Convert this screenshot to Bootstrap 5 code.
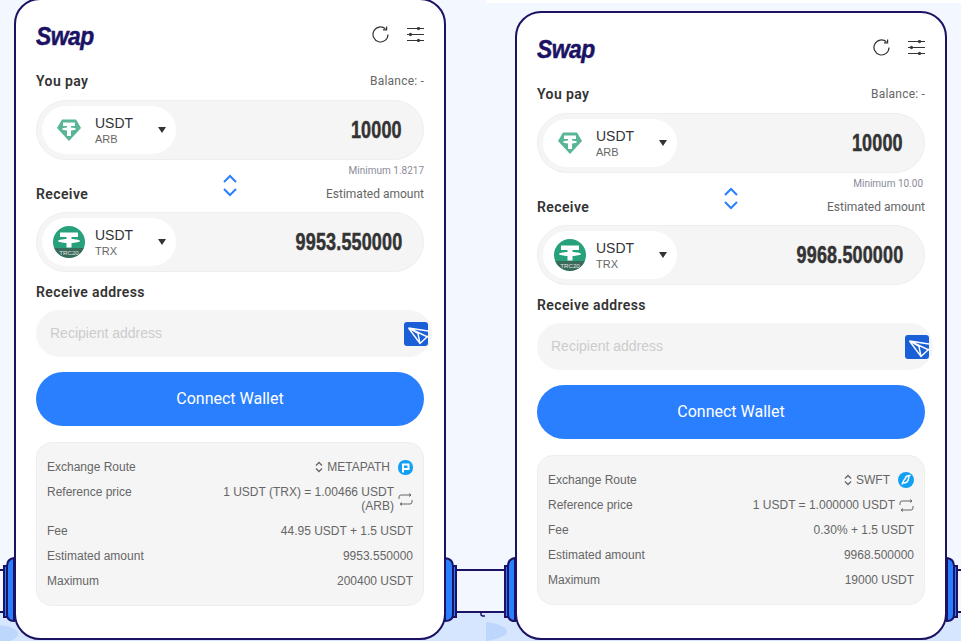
<!DOCTYPE html>
<html>
<head>
  <meta charset="utf-8">
  <title>Swap</title>
  <link href="https://cdn.jsdelivr.net/npm/bootstrap@5.3.3/dist/css/bootstrap.min.css" rel="stylesheet">
  <style>
    html, body { height: 641px; overflow: hidden; }
    body { background: #f3f7ff; font-family: Roboto, "Liberation Sans", sans-serif; color: #333; }
    .stage { position: relative; height: 641px; padding: 0 0 1px 14px; gap: 69px; z-index: 1; }
    .scenery { position: absolute; left: 0; top: 0; z-index: 0; }
    .swap-card { width: 432px; flex: none; background: #fff; border: 2px solid #1c1264; border-radius: 26px; padding: 18px 20px 33px; }
    .swap-card.wrapped { padding-bottom: 32px; }
    .card-head { height: 36px; }
    .head-icons { gap: 18px; margin-bottom: 4px; }
    .swap-logo { display: inline-block; font: italic 700 26px/36px "Liberation Sans", sans-serif; color: #1c1264; letter-spacing: -.6px; -webkit-text-stroke: .5px #1c1264; transform: scaleX(.88); transform-origin: left center; }
    .pay-row { margin-top: 18px; }
    .lbl { font-size: 14px; font-weight: 600; letter-spacing: .4px; line-height: 18px; color: #333; }
    .note { font-size: 12px; line-height: 16px; color: #666; }
    .bal-note { letter-spacing: .2px; }
    .amount-pill { height: 60px; background: #f5f5f5; border: 1px solid #eee; border-radius: 30px; padding: 0 21px 0 5px; margin-top: 10px; }
    .receive-row + .amount-pill { margin-top: 9px; }
    .token-pill { width: 134px; height: 48px; background: #fff; border-radius: 24px; padding: 0 10px 0 11px; }
    .token-icon { width: 32px; margin-right: 10px; flex: none; }
    .tk-name { font: 14px/17px "Liberation Sans", sans-serif; color: #333; }
    .tk-chain { font: 11px/13px "Liberation Sans", sans-serif; color: #666; margin-top: 1px; }
    .caret-down { width: 0; height: 0; border: 4px solid transparent; border-top: 6px solid #333; border-bottom: 0; }
    .amount { display: inline-block; font: 700 24px/28px "Liberation Sans", sans-serif; color: #333; letter-spacing: .2px; -webkit-text-stroke: .5px #333; transform: scaleX(.75); transform-origin: right center; white-space: nowrap; }
    .min-note { font-size: 10px; line-height: 12px; color: #8b8b99; text-align: right; margin-top: 5px; }
    .min-note.inset { padding-right: 2px; }
    .receive-row { display: grid; grid-template-columns: 1fr auto 1fr; margin-top: 8px; height: 18px; align-items: center; }
    .swap-arrows { align-self: start; margin-top: -11px; }
    .addr-title { margin-top: 11px; }
    .addr-pill { height: 47px; width: 396px; background: #f5f5f5; border-radius: 24px; padding: 0 4px 0 14px; margin-top: 9px; }
    .addr-input { background: transparent; border: 0; padding: 0 0 2px; font: 14px "Liberation Sans", sans-serif; box-shadow: none !important; }
    .addr-input::placeholder { color: #ccc; opacity: 1; }
    .addr-icon { flex: none; }
    .wallet-btn { height: 54px; border-radius: 27px; background: #2a7fff; border: 0; font-size: 16px; color: #fff; margin-top: 15px; }
    .info-box { background: #f5f5f5; border: 1px solid #eee; border-radius: 16px; padding: 17px 10px; font: 12px/14px "Liberation Sans", sans-serif; color: #666; gap: 11px; margin-top: 16px; }
    .route-val { height: 14px; }
    .price-text { max-width: 175px; }
  </style>
</head>

<body>
  <svg class="scenery" width="961" height="641" viewBox="0 0 961 641">
    <rect y="612" width="961" height="29" fill="#d6e6ff"/>
    <rect x="486" width="475" height="3" fill="#fff"/>
    <ellipse cx="-4" cy="634" rx="22" ry="9" fill="#bdd6fb"/>
    <path d="M486 622 C500 624 508 628 507 632 C506 636 498 639 486 641Z" fill="#bdd6fb"/>
    <path d="M0 570H4M0 612H4M456 570H505V612H456ZM957 570H961M957 612H961" fill="#f3f7ff" stroke="#1c1264" stroke-width="2"/>
    <path d="M481 612v2q0 2 2 2h2" fill="none" stroke="#1c1264" stroke-width="1.5"/>
    <g fill="#2a7fff" stroke="#1c1264" stroke-width="2">
      <path d="M4 566H8V617H4Z"/>
      <path d="M14 558Q7 559 7 566V614Q7 621 14 621Z"/>
      <path d="M452 566H456V617H452Z"/>
      <path d="M445 558Q453 559 453 566V614Q453 621 445 621Z"/>
      <path d="M505 566H509V617H505Z"/>
      <path d="M515 558Q508 559 508 566V614Q508 621 515 621Z"/>
      <path d="M953 566H957V617H953Z"/>
      <path d="M947 558Q954 559 954 566V614Q954 621 947 621Z"/>
    </g>
  </svg>

  <div class="stage d-flex align-items-end">
    <!-- left card -->
    <div class="swap-card wrapped">
      <div class="card-head d-flex justify-content-between align-items-center">
        <span class="swap-logo">Swap</span>
        <div class="head-icons d-flex align-items-center">
          <svg width="17" height="17" viewBox="0 0 17 17" fill="none" stroke="#333" stroke-width="1.2"><path d="M16 8.5A7.5 7.5 0 1 1 13.4 2.8"/><path d="M14.6 .6V3.8H11"/></svg>
          <svg width="17" height="15" viewBox="0 0 17 15" stroke="#333" stroke-width="1"><path d="M0 1.5H17M0 7.5H17M0 13.5H17"/><circle cx="11.5" cy="1.5" r="1.2" fill="#333"/><circle cx="3.5" cy="7.5" r="1.2" fill="#333"/><circle cx="11.5" cy="13.5" r="1.2" fill="#333"/></svg>
        </div>
      </div>
      <div class="pay-row d-flex justify-content-between align-items-center">
        <span class="lbl">You pay</span><span class="note bal-note">Balance: -</span>
      </div>
      <div class="amount-pill d-flex justify-content-between align-items-center">
        <div class="token-pill d-flex align-items-center">
          <svg class="token-icon" width="32" height="24" viewBox="0 0 32 24"><path d="M9 1.5H23L28 10L16 23L4 10Z" fill="#58b596"/><path d="M10 4.5H22V8H18V9.6C20.4 9.8 23 10.3 23 11C23 11.7 20.4 12.2 18 12.4V18H14V12.4C11.6 12.2 9 11.7 9 11C9 10.3 11.6 9.8 14 9.6V8H10Z" fill="#fff"/></svg>
          <div class="flex-grow-1">
            <div class="tk-name">USDT</div>
            <div class="tk-chain">ARB</div>
          </div>
          <span class="caret-down"></span>
        </div>
        <span class="amount">10000</span>
      </div>
      <div class="min-note">Minimum 1.8217</div>
      <div class="receive-row">
        <span class="lbl">Receive</span>
        <svg class="swap-arrows" width="16" height="24" viewBox="0 0 16 24" fill="none" stroke="#2a7fff" stroke-width="2"><path d="M2 8L8 2L14 8M2 15L8 21L14 15"/></svg>
        <span class="note text-end">Estimated amount</span>
      </div>
      <div class="amount-pill d-flex justify-content-between align-items-center">
        <div class="token-pill d-flex align-items-center">
          <svg class="token-icon" width="32" height="32" viewBox="0 0 32 32"><circle cx="16" cy="16" r="16" fill="#26a17b"/><path d="M1.2 22H30.8A16 16 0 0 1 1.2 22Z" fill="#3a6a5a"/><path d="M7 6.5H25V11H18.5V13C22 13.2 27 13.8 27 15C27 16.2 22 16.8 18.5 17V21.5H13.5V17C10 16.8 5 16.2 5 15C5 13.8 10 13.2 13.5 13V11H7Z" fill="#fff"/><text x="16" y="28.5" text-anchor="middle" font-size="6.2" fill="#e3e3e3" font-family="Liberation Sans">TRC20</text></svg>
          <div class="flex-grow-1">
            <div class="tk-name">USDT</div>
            <div class="tk-chain">TRX</div>
          </div>
          <span class="caret-down"></span>
        </div>
        <span class="amount">9953.550000</span>
      </div>
      <div class="lbl addr-title">Receive address</div>
      <div class="addr-pill d-flex align-items-center">
        <input class="addr-input form-control" type="text" placeholder="Recipient address">
        <svg class="addr-icon" width="24" height="24" viewBox="0 0 24 24"><rect width="24" height="24" rx="3" fill="#1a5fd6"/><path d="M4.5 6L24 9M4.5 6L16 21.5L24 14M4.5 6L24 15M4.5 6L14 11.5L16 21.5" fill="none" stroke="#fff" stroke-width="1.4"/></svg>
      </div>
      <button class="btn wallet-btn w-100">Connect Wallet</button>
      <div class="info-box d-flex flex-column">
        <div class="d-flex justify-content-between"><span>Exchange Route</span><span class="route-val d-flex align-items-center gap-1"><svg width="8" height="12" viewBox="0 0 8 12" fill="none" stroke="#666" stroke-width="1.3"><path d="M1 4.5L4 1.5L7 4.5M1 7.5L4 10.5L7 7.5"/></svg>METAPATH<svg class="ms-1" width="15" height="15" viewBox="0 0 15 15"><rect width="15" height="15" rx="7" fill="#12a0f5"/><path d="M5 12.5V4.5H10.5V9H5" fill="none" stroke="#fff" stroke-width="2"/></svg></span></div>
        <div class="d-flex justify-content-between"><span class="text-nowrap">Reference price</span><span class="d-flex align-items-center text-end"><span class="price-text">1 USDT (TRX) = 1.00466 USDT (ARB)</span><svg class="ms-1 flex-shrink-0" width="15" height="13" viewBox="0 0 15 13" fill="none" stroke="#666" stroke-width="1"><path d="M1 6V4Q1 2 3 2H13M11 .5L13 2L11 3.5M14 7V9Q14 11 12 11H2M4 9.5L2 11L4 12.5"/></svg></span></div>
        <div class="d-flex justify-content-between"><span>Fee</span><span>44.95 USDT + 1.5 USDT</span></div>
        <div class="d-flex justify-content-between"><span>Estimated amount</span><span>9953.550000</span></div>
        <div class="d-flex justify-content-between"><span>Maximum</span><span>200400 USDT</span></div>
      </div>
    </div>

    <!-- right card -->
    <div class="swap-card">
      <div class="card-head d-flex justify-content-between align-items-center">
        <span class="swap-logo">Swap</span>
        <div class="head-icons d-flex align-items-center">
          <svg width="17" height="17" viewBox="0 0 17 17" fill="none" stroke="#333" stroke-width="1.2"><path d="M16 8.5A7.5 7.5 0 1 1 13.4 2.8"/><path d="M14.6 .6V3.8H11"/></svg>
          <svg width="17" height="15" viewBox="0 0 17 15" stroke="#333" stroke-width="1"><path d="M0 1.5H17M0 7.5H17M0 13.5H17"/><circle cx="11.5" cy="1.5" r="1.2" fill="#333"/><circle cx="3.5" cy="7.5" r="1.2" fill="#333"/><circle cx="11.5" cy="13.5" r="1.2" fill="#333"/></svg>
        </div>
      </div>
      <div class="pay-row d-flex justify-content-between align-items-center">
        <span class="lbl">You pay</span><span class="note bal-note">Balance: -</span>
      </div>
      <div class="amount-pill d-flex justify-content-between align-items-center">
        <div class="token-pill d-flex align-items-center">
          <svg class="token-icon" width="32" height="24" viewBox="0 0 32 24"><path d="M9 1.5H23L28 10L16 23L4 10Z" fill="#58b596"/><path d="M10 4.5H22V8H18V9.6C20.4 9.8 23 10.3 23 11C23 11.7 20.4 12.2 18 12.4V18H14V12.4C11.6 12.2 9 11.7 9 11C9 10.3 11.6 9.8 14 9.6V8H10Z" fill="#fff"/></svg>
          <div class="flex-grow-1">
            <div class="tk-name">USDT</div>
            <div class="tk-chain">ARB</div>
          </div>
          <span class="caret-down"></span>
        </div>
        <span class="amount">10000</span>
      </div>
      <div class="min-note inset">Minimum 10.00</div>
      <div class="receive-row">
        <span class="lbl">Receive</span>
        <svg class="swap-arrows" width="16" height="24" viewBox="0 0 16 24" fill="none" stroke="#2a7fff" stroke-width="2"><path d="M2 8L8 2L14 8M2 15L8 21L14 15"/></svg>
        <span class="note text-end">Estimated amount</span>
      </div>
      <div class="amount-pill d-flex justify-content-between align-items-center">
        <div class="token-pill d-flex align-items-center">
          <svg class="token-icon" width="32" height="32" viewBox="0 0 32 32"><circle cx="16" cy="16" r="16" fill="#26a17b"/><path d="M1.2 22H30.8A16 16 0 0 1 1.2 22Z" fill="#3a6a5a"/><path d="M7 6.5H25V11H18.5V13C22 13.2 27 13.8 27 15C27 16.2 22 16.8 18.5 17V21.5H13.5V17C10 16.8 5 16.2 5 15C5 13.8 10 13.2 13.5 13V11H7Z" fill="#fff"/><text x="16" y="28.5" text-anchor="middle" font-size="6.2" fill="#e3e3e3" font-family="Liberation Sans">TRC20</text></svg>
          <div class="flex-grow-1">
            <div class="tk-name">USDT</div>
            <div class="tk-chain">TRX</div>
          </div>
          <span class="caret-down"></span>
        </div>
        <span class="amount">9968.500000</span>
      </div>
      <div class="lbl addr-title">Receive address</div>
      <div class="addr-pill d-flex align-items-center">
        <input class="addr-input form-control" type="text" placeholder="Recipient address">
        <svg class="addr-icon" width="24" height="24" viewBox="0 0 24 24"><rect width="24" height="24" rx="3" fill="#1a5fd6"/><path d="M4.5 6L24 9M4.5 6L16 21.5L24 14M4.5 6L24 15M4.5 6L14 11.5L16 21.5" fill="none" stroke="#fff" stroke-width="1.4"/></svg>
      </div>
      <button class="btn wallet-btn w-100">Connect Wallet</button>
      <div class="info-box d-flex flex-column">
        <div class="d-flex justify-content-between"><span>Exchange Route</span><span class="route-val d-flex align-items-center gap-1"><svg width="8" height="12" viewBox="0 0 8 12" fill="none" stroke="#666" stroke-width="1.3"><path d="M1 4.5L4 1.5L7 4.5M1 7.5L4 10.5L7 7.5"/></svg>SWFT<svg class="ms-1" width="16" height="16" viewBox="0 0 16 16"><circle cx="8" cy="8" r="8" fill="#12a0f5"/><path d="M4 12.5C5 10 5.5 8 7 7C7.5 5 9.5 3.5 11.5 3.5C10.5 4.5 10.8 6.5 10 8.5C9.2 10.5 7.5 11 5.5 11" fill="none" stroke="#fff" stroke-width="1.5"/></svg></span></div>
        <div class="d-flex justify-content-between"><span class="text-nowrap">Reference price</span><span class="d-flex align-items-center text-end"><span>1 USDT = 1.000000 USDT</span><svg class="ms-1 flex-shrink-0" width="15" height="13" viewBox="0 0 15 13" fill="none" stroke="#666" stroke-width="1"><path d="M1 6V4Q1 2 3 2H13M11 .5L13 2L11 3.5M14 7V9Q14 11 12 11H2M4 9.5L2 11L4 12.5"/></svg></span></div>
        <div class="d-flex justify-content-between"><span>Fee</span><span>0.30% + 1.5 USDT</span></div>
        <div class="d-flex justify-content-between"><span>Estimated amount</span><span>9968.500000</span></div>
        <div class="d-flex justify-content-between"><span>Maximum</span><span>19000 USDT</span></div>
      </div>
    </div>
  </div>

  <script src="https://cdn.jsdelivr.net/npm/bootstrap@5.3.3/dist/js/bootstrap.bundle.min.js"></script>
</body>
</html>
